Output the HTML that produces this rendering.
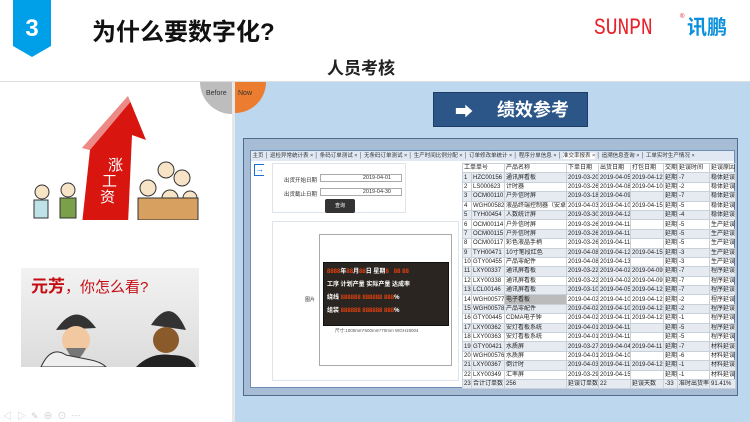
<!DOCTYPE html><html><head><meta charset="utf-8"><style>
*{margin:0;padding:0;box-sizing:border-box}
body{width:750px;height:422px;overflow:hidden;background:#fff;font-family:"Liberation Sans","Noto Sans CJK SC",sans-serif;position:relative}
.a{position:absolute}
table{border-collapse:collapse;font-size:6px;color:#222}
td{border:1px solid #c8d0da;height:9.4px;padding:0 1px;white-space:nowrap;overflow:hidden;line-height:8px}
tr:nth-child(even) td{background:#e6ebf2}
</style></head><body>
<!-- header -->
<svg class="a" style="left:13px;top:0" width="38" height="58"><polygon points="0,0 38,0 38,46 19,57 0,46" fill="#00a0e9"/><text x="19" y="36" font-size="24" font-weight="bold" fill="#fff" text-anchor="middle" font-family="Liberation Sans">3</text></svg>
<div class="a" style="left:92px;top:12px;font-size:24px;font-weight:bold;color:#111">为什么要数字化?</div>
<div class="a" style="left:594px;top:16px;font-size:23px;color:#e8212a;letter-spacing:0px;font-family:'Liberation Mono';transform:scaleX(.85);transform-origin:left;line-height:24px">SUNPN</div>
<div class="a" style="left:680px;top:14px;font-size:6px;color:#e8212a">®</div>
<div class="a" style="left:687px;top:16px;font-size:20px;font-weight:bold;color:#0a8fdc;line-height:24px">讯鹏</div>
<div class="a" style="left:327px;top:54px;font-size:17px;font-weight:bold;color:#222">人员考核</div>
<div class="a" style="left:0;top:81px;width:750px;height:1px;background:#ddd"></div>
<!-- left -->
<div class="a" style="left:232px;top:82px;width:3px;height:340px;background:#e8e8e8"></div>
<div class="a" style="left:200px;top:82px;width:32px;height:32px;border-bottom-left-radius:32px;background:#bdbdbd"></div>
<div class="a" style="left:206px;top:90px;font-size:7px;color:#333">Before</div>
<!-- illus 1 -->
<svg class="a" style="left:20px;top:90px" width="185" height="130">
<polygon points="62,58 108,6 126,50 112,45 108,134 62,134 70,60" fill="#d8150f"/>
<polygon points="62,58 108,6 112,10 70,60" fill="#fff" opacity=".5"/>
<text x="88" y="80" font-size="15" fill="#fff" font-family="Noto Sans CJK SC">涨</text>
<text x="82" y="96" font-size="15" fill="#fff" font-family="Noto Sans CJK SC">工</text>
<text x="80" y="112" font-size="15" fill="#fff" font-family="Noto Sans CJK SC">资</text>
<circle cx="22" cy="102" r="7" fill="#f7e3c5" stroke="#333"/><rect x="14" y="110" width="14" height="18" fill="#bfe2e8" stroke="#333"/>
<circle cx="48" cy="100" r="7" fill="#f7e3c5" stroke="#333"/><rect x="40" y="108" width="16" height="20" fill="#7aa04a" stroke="#333"/>
<circle cx="128" cy="98" r="8" fill="#f7e3c5" stroke="#333"/><circle cx="146" cy="80" r="8" fill="#f7e3c5" stroke="#333"/><circle cx="162" cy="88" r="8" fill="#f7e3c5" stroke="#333"/><circle cx="150" cy="108" r="8" fill="#f7e3c5" stroke="#333"/><circle cx="170" cy="108" r="7" fill="#f7e3c5" stroke="#333"/>
<rect x="118" y="108" width="60" height="22" fill="#d8a060" stroke="#333"/>
<text x="150" y="140" font-size="4" fill="#c00">ZJ.CFTCN.COM</text>
</svg>
<!-- illus 2 -->
<div class="a" style="left:21px;top:268px;width:178px;height:99px;background:linear-gradient(#f2f2f2,#dcdcdc)"></div>
<div class="a" style="left:31px;top:272px;font-size:17px;font-weight:bold;color:#c40d12">元芳<span style="font-size:15px;font-weight:normal">，你怎么看?</span></div>
<svg class="a" style="left:21px;top:300px" width="178" height="67">
<path d="M35 30 Q55 0 75 28Z" fill="#333"/><circle cx="55" cy="40" r="14" fill="#f1c8a0"/><path d="M45 48 Q55 70 65 48" fill="#777"/><path d="M20 67 Q30 45 45 55 L70 60 Q80 62 85 67Z" fill="#eee" stroke="#333"/>
<path d="M130 25 Q150 -5 165 30Z" fill="#333"/><circle cx="145" cy="40" r="13" fill="#8a5a2a"/><path d="M115 67 Q130 52 150 55 Q170 55 175 67Z" fill="#222"/>
</svg>
<div class="a" style="left:3px;top:409px;font-size:9px;color:#ccc;letter-spacing:5px">◁▷✎⊕⊙⋯</div>
<!-- right -->
<div class="a" style="left:235px;top:82px;width:515px;height:340px;background:#bdd7ee"></div>
<div class="a" style="left:235px;top:82px;width:31px;height:31px;border-bottom-right-radius:31px;background:#ec7c30"></div>
<div class="a" style="left:238px;top:90px;font-size:7px;color:#333">Now</div>
<div class="a" style="left:433px;top:92px;width:155px;height:35px;background:#2b5687;border:1px solid #1d3d66"></div>
<div class="a" style="left:455px;top:98px;font-size:18px;color:#fff">➡</div>
<div class="a" style="left:497px;top:96px;font-size:18px;font-weight:bold;color:#fff">绩效参考</div>
<!-- window -->
<div class="a" style="left:243px;top:138px;width:495px;height:258px;background:#a7bdd6;border:1px solid #506a8a"></div>
<div class="a" style="left:250px;top:150px;width:485px;height:238px;background:#fff;border:1px solid #6e8fb5"></div>
<div class="a" style="left:251px;top:151px;width:483px;height:10px;background:#dfe8f3;font-size:5.5px;color:#333;line-height:10px;white-space:nowrap;overflow:hidden">&nbsp;主页 │ 巡检异常统计表 × │ 条码订单测试 × │ 无条码订单测试 × │ 生产时间比例分配 × │ 订单修改单统计 × │ 程序分单信息 × │ <span style="background:#fff">准交率报表 ×</span> │ 追溯信息查询 × │ 工单实时生产情况 ×</div>
<!-- left form -->
<div class="a" style="left:254px;top:164px;width:10px;height:12px;border:1.5px solid #1a6fd0;border-right:none;font-size:9px;color:#1a6fd0;line-height:9px">→</div>
<div class="a" style="left:272px;top:163px;width:134px;height:50px;border:1px solid #dde4ec"></div>
<div class="a" style="left:274px;top:165px;width:125px;height:45px;font-size:5.5px;color:#333">
<div style="position:absolute;left:10px;top:11px">出货开始日期</div>
<div style="position:absolute;left:46px;top:9px;width:82px;height:8px;border:1px solid #aaa;text-align:right;padding-right:10px;line-height:7px">2019-04-01</div>
<div style="position:absolute;left:10px;top:25px">出货截止日期</div>
<div style="position:absolute;left:46px;top:23px;width:82px;height:8px;border:1px solid #aaa;text-align:right;padding-right:10px;line-height:7px">2019-04-30</div>
</div>
<div class="a" style="left:325px;top:199px;width:30px;height:14px;background:#333;border-radius:2px;color:#fff;font-size:5px;text-align:center;line-height:14px">查询</div>
<div class="a" style="left:272px;top:221px;width:187px;height:160px;border:1px solid #dde4ec"></div>
<div class="a" style="left:305px;top:296px;font-size:5px;color:#333">图片</div>
<div class="a" style="left:319px;top:234px;width:133px;height:132px;border:1px solid #aaa;background:#fff"></div>
<div class="a" style="left:323px;top:262px;width:126px;height:64px;background:#2a2520;border:1px solid #111"></div>
<div class="a" style="left:327px;top:266px;width:118px;height:56px;font-size:6px;color:#e04010;line-height:13px;font-weight:bold;white-space:nowrap">
8888<span style="color:#fff">年</span>88<span style="color:#fff">月</span>88<span style="color:#fff">日 星期</span>8 &nbsp;&nbsp;88 88<br>
<span style="color:#fff">工序 计划产量 实际产量 达成率</span><br>
<span style="color:#fff">绕线</span> 888888 888888 888<span style="color:#fff">%</span><br>
<span style="color:#fff">组装</span> 888888 888888 888<span style="color:#fff">%</span></div>
<div class="a" style="left:335px;top:328px;font-size:4.5px;color:#555">尺寸:1000mm*500mm*70mm WGH19004</div>
<!-- grid -->
<table class="a" style="left:462px;top:163px;width:273px;table-layout:fixed">
<colgroup><col style="width:9px"><col style="width:33px"><col style="width:62px"><col style="width:32px"><col style="width:32px"><col style="width:33px"><col style="width:14px"><col style="width:32px"><col style="width:26px"></colgroup>
<tr><td style="background:#fff" colspan="2">工单单号</td><td>产品名称</td><td>下单日期</td><td>出货日期</td><td>打包日期</td><td>交期</td><td>延误时间</td><td>延误原因</td></tr>
<tr><td>1</td><td>HZC00156</td><td>通讯屏看板</td><td>2019-03-20</td><td>2019-04-05</td><td>2019-04-12</td><td>延期</td><td>-7</td><td>稳体延误</td></tr>
<tr><td>2</td><td>LS000623</td><td>计时器</td><td>2019-03-26</td><td>2019-04-08</td><td>2019-04-10</td><td>延期</td><td>-2</td><td>稳体延误</td></tr>
<tr><td>3</td><td>OCM00110</td><td>户外信时屏</td><td>2019-03-18</td><td>2019-04-09</td><td></td><td>延期</td><td>-7</td><td>稳体延误</td></tr>
<tr><td>4</td><td>WGH00582</td><td>液晶终端控制器（安卓）</td><td>2019-04-03</td><td>2019-04-10</td><td>2019-04-15</td><td>延期</td><td>-5</td><td>稳体延误</td></tr>
<tr><td>5</td><td>TYH00454</td><td>人数统计屏</td><td>2019-03-30</td><td>2019-04-12</td><td></td><td>延期</td><td>-4</td><td>稳体延误</td></tr>
<tr><td>6</td><td>OCM00114</td><td>户外信时屏</td><td>2019-03-26</td><td>2019-04-11</td><td></td><td>延期</td><td>-5</td><td>生产延误</td></tr>
<tr><td>7</td><td>OCM00115</td><td>户外信时屏</td><td>2019-03-26</td><td>2019-04-11</td><td></td><td>延期</td><td>-5</td><td>生产延误</td></tr>
<tr><td>8</td><td>OCM00117</td><td>彩色液晶手柄</td><td>2019-03-26</td><td>2019-04-11</td><td></td><td>延期</td><td>-5</td><td>生产延误</td></tr>
<tr><td>9</td><td>TYH00471</td><td>10寸笔段红色</td><td>2019-04-08</td><td>2019-04-12</td><td>2019-04-15</td><td>延期</td><td>-3</td><td>生产延误</td></tr>
<tr><td>10</td><td>GTY00455</td><td>产品零配件</td><td>2019-04-08</td><td>2019-04-13</td><td></td><td>延期</td><td>-3</td><td>生产延误</td></tr>
<tr><td>11</td><td>LXY00337</td><td>通讯屏看板</td><td>2019-03-22</td><td>2019-04-02</td><td>2019-04-09</td><td>延期</td><td>-7</td><td>程序延误</td></tr>
<tr><td>12</td><td>LXY00338</td><td>通讯屏看板</td><td>2019-03-22</td><td>2019-04-02</td><td>2019-04-09</td><td>延期</td><td>-7</td><td>程序延误</td></tr>
<tr><td>13</td><td>LCL00146</td><td>通讯屏看板</td><td>2019-03-10</td><td>2019-04-05</td><td>2019-04-12</td><td>延期</td><td>-7</td><td>程序延误</td></tr>
<tr><td>14</td><td>WGH00577</td><td style="background:#bbb">电子看板</td><td>2019-04-02</td><td>2019-04-10</td><td>2019-04-12</td><td>延期</td><td>-2</td><td>程序延误</td></tr>
<tr><td>15</td><td>WGH00578</td><td>产品零配件</td><td>2019-04-02</td><td>2019-04-10</td><td>2019-04-12</td><td>延期</td><td>-2</td><td>程序延误</td></tr>
<tr><td>16</td><td>GTY00445</td><td>CDMA电子钟</td><td>2019-04-02</td><td>2019-04-11</td><td>2019-04-12</td><td>延期</td><td>-1</td><td>程序延误</td></tr>
<tr><td>17</td><td>LXY00362</td><td>安灯看板系统</td><td>2019-04-01</td><td>2019-04-11</td><td></td><td>延期</td><td>-5</td><td>程序延误</td></tr>
<tr><td>18</td><td>LXY00363</td><td>安灯看板系统</td><td>2019-04-01</td><td>2019-04-11</td><td></td><td>延期</td><td>-5</td><td>程序延误</td></tr>
<tr><td>19</td><td>GTY00421</td><td>水质屏</td><td>2019-03-27</td><td>2019-04-04</td><td>2019-04-11</td><td>延期</td><td>-7</td><td>材料延误</td></tr>
<tr><td>20</td><td>WGH00576</td><td>水质屏</td><td>2019-04-01</td><td>2019-04-10</td><td></td><td>延期</td><td>-6</td><td>材料延误</td></tr>
<tr><td>21</td><td>LXY00367</td><td>倒计时</td><td>2019-04-03</td><td>2019-04-11</td><td>2019-04-12</td><td>延期</td><td>-1</td><td>材料延误</td></tr>
<tr><td>22</td><td>LXY00349</td><td>汇率屏</td><td>2019-03-29</td><td>2019-04-15</td><td></td><td>延期</td><td>-1</td><td>材料延误</td></tr>
<tr><td>23</td><td>合计订单数</td><td>256</td><td>延误订单数</td><td>22</td><td>延误天数</td><td>-33</td><td>准时出货率</td><td>91.41%</td></tr>
</table>
</body></html>
